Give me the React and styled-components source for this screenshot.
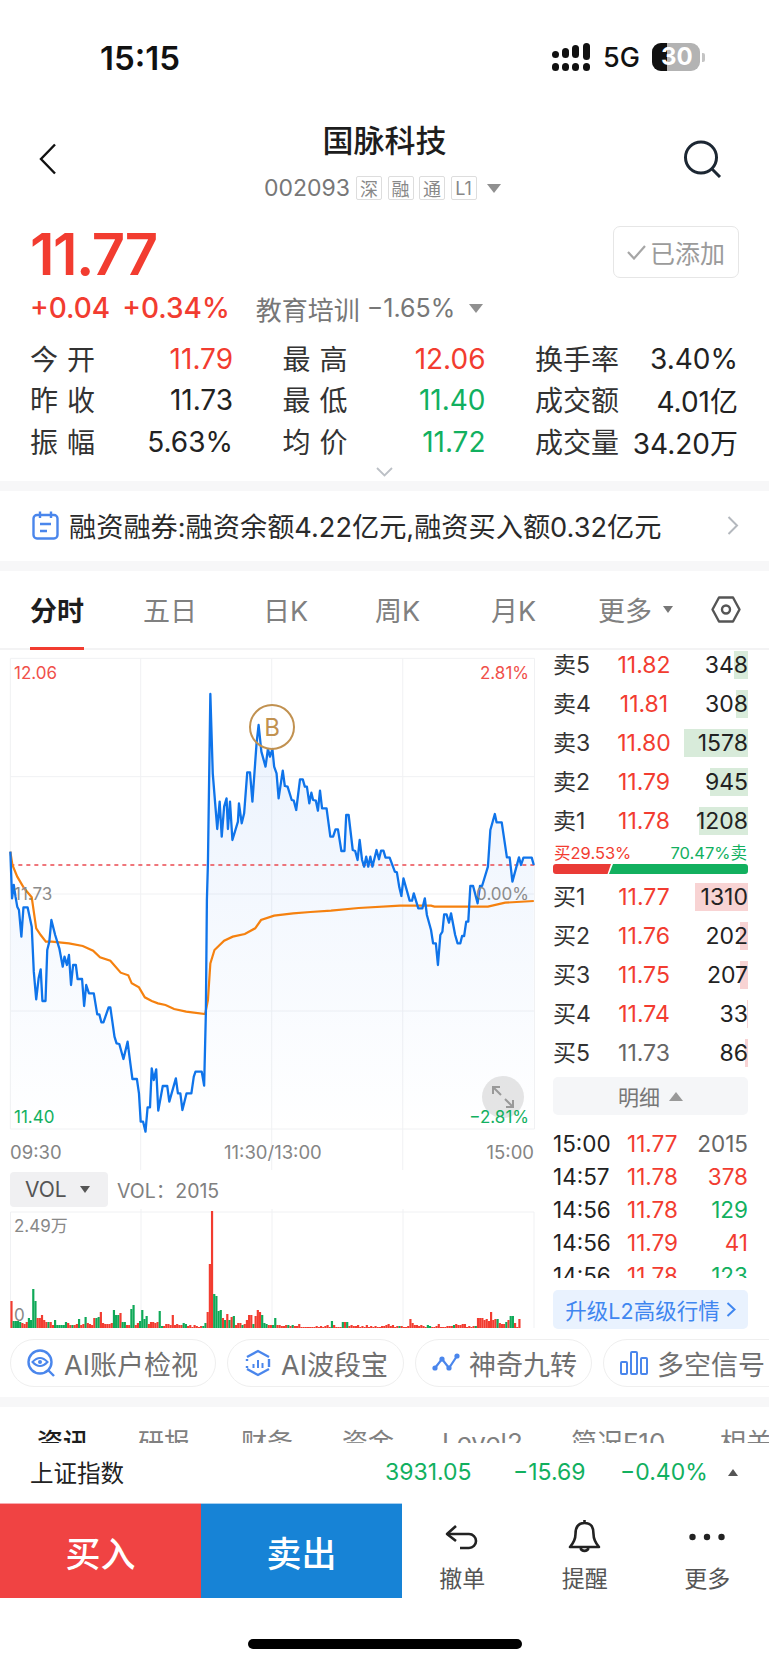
import styled, { createGlobalStyle } from "styled-components"

const RED = "#f23c30"
const GREEN = "#12b05f"
const BLUE = "#4a86ec"

const GlobalStyle = createGlobalStyle`
  html, body {
    margin: 0;
    padding: 0;
    background: #fff;
    font-family: Inter, "Noto Sans CJK SC", sans-serif;
    color: #222;
  }
  * { box-sizing: border-box; }
`

// traced from the reference: x = 2.9 units per px, y = 3 units per px, origin at (0, 650)
const pricePts = "30,605 35,745 40,705 45,740 50,770 55,780 62,860 68,772 80,772 92,830 98,965 105,1048 112,985 118,958 123,1053 132,1053 137,900 143,875 149,810 160,855 172,895 182,950 187,920 194,945 200,915 206,1005 212,945 220,945 225,987 238,987 244,1068 250,1005 258,1030 272,1030 282,1093 288,1093 294,1117 300,1117 315,1072 320,1072 332,1160 338,1180 346,1182 358,1227 370,1175 378,1240 384,1287 397,1287 403,1330 408,1415 415,1415 422,1445 428,1372 435,1372 440,1255 446,1290 453,1258 459,1382 472,1308 485,1308 491,1355 510,1285 516,1330 523,1330 529,1380 541,1330 555,1330 562,1280 567,1265 585,1265 592,1307 597,1090 600,750 603,640 610,132 617,370 624,460 630,537 637,455 643,560 650,470 657,445 661,537 667,455 674,570 690,515 693,460 701,520 708,490 717,367 725,367 732,455 744,280 750,225 758,305 770,350 777,297 783,320 790,297 795,350 802,370 808,445 813,410 820,362 826,408 834,410 846,450 852,452 859,480 870,388 878,388 884,410 890,410 897,460 903,428 908,450 916,452 922,482 928,422 934,475 947,475 958,560 966,560 973,538 980,538 990,603 999,603 1004,495 1011,495 1023,600 1030,603 1037,630 1043,570 1050,630 1056,650 1062,620 1068,650 1074,620 1080,650 1092,600 1099,628 1105,602 1112,602 1118,623 1130,623 1145,665 1151,667 1158,712 1164,738 1170,685 1188,752 1195,752 1200,730 1213,775 1225,775 1232,745 1238,795 1250,840 1256,880 1264,880 1270,945 1277,855 1283,845 1288,793 1295,793 1302,818 1308,790 1320,855 1327,880 1335,880 1340,858 1346,858 1352,815 1358,815 1364,708 1372,708 1385,760 1392,708 1398,708 1415,650 1422,540 1435,492 1440,517 1455,517 1470,622 1478,622 1486,695 1505,622 1511,645 1518,623 1542,623 1548,645"
const avgPts = "30,605 36,645 50,680 70,715 92,742 105,835 118,855 133,875 150,875 200,880 240,888 270,902 290,922 320,932 350,968 372,976 382,1000 403,1012 420,1042 440,1053 458,1060 480,1065 505,1077 540,1085 595,1092 603,1050 610,940 622,900 650,872 675,860 710,852 740,835 757,810 795,797 850,790 900,786 960,782 1040,774 1160,767 1250,767 1260,770 1415,770 1465,758 1548,753"

const volHeights = [27,7,7,7,6,5,4,6,10,8,39,27,10,10,13,8,6,6,6,3,8,3,3,3,3,6,5,3,3,3,4,9,3,4,11,5,4,3,10,10,11,16,5,4,4,4,5,18,13,13,15,6,6,3,3,19,23,3,5,7,18,9,12,4,6,6,5,6,17,2,2,4,4,3,13,3,4,3,3,5,4,2,3,1,3,2,1,2,2,5,16,64,117,34,32,17,18,10,8,14,8,11,12,3,5,5,3,4,8,13,13,4,12,18,16,13,5,4,3,3,3,10,3,3,2,2,3,3,2,3,2,2,4,1,1,1,1,1,1,1,2,1,2,1,2,3,1,7,3,1,1,1,6,6,6,2,3,2,2,3,1,2,1,3,1,2,1,2,1,1,2,2,3,4,2,3,1,2,2,2,1,1,2,9,5,3,3,2,3,2,1,3,2,1,1,2,4,1,1,1,2,2,2,3,4,3,3,4,4,1,2,1,2,2,10,10,10,8,9,7,16,8,9,9,5,4,4,6,8,12,12,5,1,9]
const volGreen = new Set([1,2,3,4,8,9,10,11,17,20,21,22,23,24,25,28,31,34,39,40,47,48,49,51,52,55,56,59,60,61,62,68,69,79,80,88,89,93,94,95,96,98,100,102,106,111,115,116,117,120,121,127,129,147,152,154,178,191,192,203,213,223,227,229,230,240])

const asks = [
  { label: "卖5", price: "11.82", vol: "348", bar: 14 },
  { label: "卖4", price: "11.81", vol: "308", bar: 12 },
  { label: "卖3", price: "11.80", vol: "1578", bar: 64 },
  { label: "卖2", price: "11.79", vol: "945", bar: 38 },
  { label: "卖1", price: "11.78", vol: "1208", bar: 49 },
]
const bids = [
  { label: "买1", price: "11.77", vol: "1310", bar: 53 },
  { label: "买2", price: "11.76", vol: "202", bar: 8 },
  { label: "买3", price: "11.75", vol: "207", bar: 8 },
  { label: "买4", price: "11.74", vol: "33", bar: 1 },
  { label: "买5", price: "11.73", vol: "86", bar: 3, flat: true },
]
const ticks = [
  ["15:00", "11.77", "2015", "#666"],
  ["14:57", "11.78", "378", RED],
  ["14:56", "11.78", "129", GREEN],
  ["14:56", "11.79", "41", RED],
  ["14:56", "11.78", "123", GREEN],
]
const stats = [
  ["今 开", "11.79", RED],
  ["最 高", "12.06", RED],
  ["换手率", "3.40%", "#222"],
  ["昨 收", "11.73", "#222"],
  ["最 低", "11.40", GREEN],
  ["成交额", "4.01亿", "#222"],
  ["振 幅", "5.63%", "#222"],
  ["均 价", "11.72", GREEN],
  ["成交量", "34.20万", "#222"],
]

export default function App() {
  return (
    <Page>
      <GlobalStyle />
      <StatusBar>
        <Clock>15:15</Clock>
        <StatusRight>
          <svg width="38" height="28" viewBox="0 0 38 28" fill="#111">
            <rect x="0" y="8" width="7" height="7" rx="3.5" />
            <rect x="10" y="5" width="7" height="10" rx="3.5" />
            <rect x="20" y="2" width="7" height="13" rx="3.5" />
            <rect x="31" y="0" width="7" height="17" rx="3.5" />
            <rect x="0" y="20" width="7" height="8" rx="3.5" />
            <rect x="10" y="20" width="7" height="8" rx="3.5" />
            <rect x="20" y="20" width="7" height="8" rx="3.5" />
            <rect x="31" y="20" width="7" height="8" rx="3.5" />
          </svg>
          <Network>5G</Network>
          <Battery>
            <BatteryLevel />
            <BatteryText>30</BatteryText>
          </Battery>
          <BatteryNub />
        </StatusRight>
      </StatusBar>

      <NavBar>
        <BackIcon width="18" height="32" viewBox="0 0 18 32" fill="none" stroke="#111" strokeWidth="2.4">
          <path d="M16 1.5 L2 16 L16 30.5" />
        </BackIcon>
        <NavCenter>
          <Title>国脉科技</Title>
          <SubTitle>
            <Code>002093</Code>
            <Badge>深</Badge>
            <Badge>融</Badge>
            <Badge>通</Badge>
            <Badge>L1</Badge>
            <DownTriangle $w={15} $h={9} $color="#909090" $ml={5} />
          </SubTitle>
        </NavCenter>
        <SearchIcon width="40" height="38" viewBox="0 0 40 38" fill="none" stroke="#1c2733" strokeWidth="3">
          <circle cx="18" cy="17.5" r="15.5" />
          <path d="M29 29 L37 37" />
        </SearchIcon>
      </NavBar>

      <Quote>
        <PriceRow>
          <BigPrice>11.77</BigPrice>
          <AddedButton>
            <svg width="19" height="15" viewBox="0 0 19 15" fill="none" stroke="#a6a6a6" strokeWidth="2.2">
              <path d="M1 7 L7 13.5 L18 1" />
            </svg>
            已添加
          </AddedButton>
        </PriceRow>
        <ChangeRow>
          <ChangeValue>+0.04</ChangeValue>
          <ChangeValue>+0.34%</ChangeValue>
          <Sector>教育培训</Sector>
          <SectorChange>−1.65%</SectorChange>
          <DownTriangle $w={15} $h={9} $color="#909090" $ml={14} />
        </ChangeRow>
        <StatGrid>
          {stats.map(([label, value, color]) => (
            <Stat key={label}>
              <StatLabel>{label}</StatLabel>
              <StatValue $color={color}>{value}</StatValue>
            </Stat>
          ))}
        </StatGrid>
        <ExpandHint>
          <svg width="17" height="10" viewBox="0 0 17 10" fill="none" stroke="#bcc0c6" strokeWidth="1.8">
            <path d="M1 1 L8.5 8.5 L16 1" />
          </svg>
        </ExpandHint>
      </Quote>

      <Band />

      <Banner>
        <svg width="27" height="29" viewBox="0 0 27 29" fill="none" stroke={BLUE} strokeWidth="2.4">
          <rect x="1.5" y="4" width="24" height="23.5" rx="3.5" />
          <path d="M8 0.5 V7 M19 0.5 V7 M8 13 H19 M8 20 H15" />
        </svg>
        <BannerText>融资融券:融资余额4.22亿元,融资买入额0.32亿元</BannerText>
        <svg width="12" height="19" viewBox="0 0 12 19" fill="none" stroke="#b4b8be" strokeWidth="2">
          <path d="M1.5 1 L10 9.5 L1.5 18" />
        </svg>
      </Banner>

      <Band />

      <ChartTabs>
        <ChartTab $active $w={54} $mr={59}>分时</ChartTab>
        <ChartTab $w={50} $mr={70}>五日</ChartTab>
        <ChartTab $w={42} $mr={70}>日K</ChartTab>
        <ChartTab $w={44} $mr={72}>周K</ChartTab>
        <ChartTab $w={42} $mr={72}>月K</ChartTab>
        <MoreTab>
          更多
          <DownTriangle $w={11} $h={7} $color="#777" $ml={11} />
        </MoreTab>
        <svg width="30" height="27" viewBox="0 0 30 27" fill="none" stroke="#555" strokeWidth="2.4">
          <path d="M8 1.5 H22 L28.5 13.5 L22 25.5 H8 L1.5 13.5 Z" strokeLinejoin="round" />
          <circle cx="15" cy="13.5" r="4" />
        </svg>
      </ChartTabs>

      <Market>
        <ChartColumn>
          <PriceChart>
            <ChartSvg viewBox="0 0 1566 1560" preserveAspectRatio="none">
              <defs>
                <linearGradient id="area" x1="0" y1="0" x2="0" y2="1">
                  <stop offset="0" stopColor="#2c7cf0" stopOpacity="0.1" />
                  <stop offset="1" stopColor="#2c7cf0" stopOpacity="0" />
                </linearGradient>
              </defs>
              <g stroke="#f0f1f3" strokeWidth="1" fill="none">
                <path d="M30 25 H1550 M30 380 H1550 M30 732 H1550 M30 1083 H1550 M30 1437 H1550 M30 25 V1437 M1550 25 V1437" vectorEffect="non-scaling-stroke" />
                <path d="M408 25 V1560 M788 25 V1560 M1168 25 V1560" vectorEffect="non-scaling-stroke" />
              </g>
              <polygon points={`${pricePts} 1548,1437 30,1437`} fill="url(#area)" />
              <path d="M30 645 H1550" stroke="#ea4a50" strokeWidth="1.5" strokeDasharray="4 4" fill="none" vectorEffect="non-scaling-stroke" />
              <polyline points={avgPts} fill="none" stroke="#f5810f" strokeWidth="2.2" vectorEffect="non-scaling-stroke" />
              <polyline points={pricePts} fill="none" stroke="#0f74ea" strokeWidth="2.3" strokeLinejoin="round" vectorEffect="non-scaling-stroke" />
            </ChartSvg>
            <AxisLabel $left={14} $top={12} $color="#f0504a">12.06</AxisLabel>
            <AxisLabel $right={11} $top={12} $color="#f0504a">2.81%</AxisLabel>
            <AxisLabel $left={14} $top={233} $color="#8c8c8c">11.73</AxisLabel>
            <AxisLabel $right={11} $top={233} $color="#8c8c8c">0.00%</AxisLabel>
            <ExpandButton>
              <svg width="24" height="24" viewBox="0 0 24 24" fill="none" stroke="#999" strokeWidth="2">
                <path d="M2 2 L10 10 M2 9 V2 H9 M22 22 L14 14 M22 15 V22 H15" />
              </svg>
            </ExpandButton>
            <AxisLabel $left={14} $top={456} $color={GREEN}>11.40</AxisLabel>
            <AxisLabel $right={11} $top={456} $color={GREEN}>−2.81%</AxisLabel>
            <TradeMark>B</TradeMark>
            <TimeLabel $left={10}>09:30</TimeLabel>
            <TimeLabel $left={224}>11:30/13:00</TimeLabel>
            <TimeLabel $right={6}>15:00</TimeLabel>
          </PriceChart>
          <VolHeader>
            <VolSelect>
              VOL
              <DownTriangle $w={11} $h={7} $color="#555" $ml={13} />
            </VolSelect>
            <VolText>VOL：2015</VolText>
          </VolHeader>
          <VolChart>
            <svg width="540" height="128" viewBox="0 0 540 128">
              <path d="M10.5 5 H534 M10.5 5 V121 M534 5 V121 M141 2 V121 M272 2 V121 M403 2 V121" stroke="#f0f1f3" fill="none" />
              {volHeights.map((h, i) => (
                <rect key={i} x={10.4 + i * 2.18} y={121 - h} width="2.18" height={h} fill={volGreen.has(i) ? "#0fa958" : "#f23c30"} />
              ))}
            </svg>
            <VolLabel $top={7}>2.49万</VolLabel>
            <VolLabel $top={96}>0</VolLabel>
          </VolChart>
        </ChartColumn>

        <BookColumn>
          <BookGroup>
            {asks.map(a => (
              <BookRow key={a.label}>
                <BookLabel>{a.label}</BookLabel>
                <BookPrice>{a.price}</BookPrice>
                <BookVol>
                  <VolBar $color="#d8ebda" style={{ width: a.bar }} />
                  <VolNum>{a.vol}</VolNum>
                </BookVol>
              </BookRow>
            ))}
          </BookGroup>
          <Ratio>
            <RatioLabels>
              <RatioText $color={RED}>买29.53%</RatioText>
              <RatioText $color={GREEN}>70.47%卖</RatioText>
            </RatioLabels>
            <RatioBar>
              <RatioBuy />
              <RatioSell />
            </RatioBar>
          </Ratio>
          <BookGroup>
            {bids.map(b => (
              <BookRow key={b.label}>
                <BookLabel>{b.label}</BookLabel>
                <BookPrice $flat={b.flat}>{b.price}</BookPrice>
                <BookVol>
                  <VolBar $color="#f8d3d3" style={{ width: b.bar }} />
                  <VolNum>{b.vol}</VolNum>
                </BookVol>
              </BookRow>
            ))}
          </BookGroup>
          <DetailToggle>
            明细
            <UpTriangle $w={15} $h={9} $color="#999" $ml={9} />
          </DetailToggle>
          <TickList>
            {ticks.map(([time, price, vol, color], i) => (
              <TickRow key={i}>
                <span>{time}</span>
                <TickPrice>{price}</TickPrice>
                <TickVol $color={color}>{vol}</TickVol>
              </TickRow>
            ))}
          </TickList>
          <UpgradeButton>
            升级L2高级行情
            <svg width="10" height="15" viewBox="0 0 10 15" fill="none" stroke="#3f86f0" strokeWidth="2">
              <path d="M1.5 1 L8.5 7.5 L1.5 14" />
            </svg>
          </UpgradeButton>
        </BookColumn>
      </Market>

      <Pills>
        <Pill $w={206}>
          <svg width="28" height="28" viewBox="0 0 28 28" fill="none" stroke={BLUE} strokeWidth="2.4">
            <circle cx="13" cy="13" r="11.5" />
            <path d="M5.5 13 Q13 5 20.5 13 Q13 21 5.5 13 Z" strokeWidth="2" />
            <circle cx="13" cy="13" r="2" fill={BLUE} stroke="none" />
            <path d="M21 21 L27 27" />
          </svg>
          <PillText>AI账户检视</PillText>
        </Pill>
        <Pill $w={177}>
          <svg width="28" height="28" viewBox="0 0 28 28" fill="none" stroke={BLUE} strokeWidth="2.4">
            <path d="M3 8 L14 2 L25 8 M25 20 L14 26 L3 20 M3 10 V12 M3 17 V19 M25 10 V18" />
            <path d="M9.5 15 V19 M14 11 V19 M18.5 14 V19" strokeWidth="2" />
          </svg>
          <PillText>AI波段宝</PillText>
        </Pill>
        <Pill $w={177}>
          <svg width="28" height="22" viewBox="0 0 28 22" fill="none" stroke={BLUE} strokeWidth="2.2">
            <path d="M3 16 L10 7 L17 16 L25 4" />
            <circle cx="3" cy="16" r="2.6" fill={BLUE} stroke="none" />
            <circle cx="10" cy="7" r="2.6" fill={BLUE} stroke="none" />
            <circle cx="17" cy="16" r="2.6" fill={BLUE} stroke="none" />
            <circle cx="25" cy="4" r="2.6" fill={BLUE} stroke="none" />
          </svg>
          <PillText>神奇九转</PillText>
        </Pill>
        <Pill $w={190}>
          <svg width="28" height="24" viewBox="0 0 28 24" fill="none" stroke={BLUE} strokeWidth="2">
            <rect x="1" y="11" width="6" height="12" rx="1" />
            <rect x="11" y="1" width="6" height="22" rx="1" />
            <rect x="21" y="7" width="6" height="16" rx="1" />
          </svg>
          <PillText>多空信号</PillText>
        </Pill>
      </Pills>

      <Band />

      <InfoTabs>
        <InfoTab $active $w={101}>资讯</InfoTab>
        <InfoTab $w={103}>研报</InfoTab>
        <InfoTab $w={101}>财务</InfoTab>
        <InfoTab $w={100}>资金</InfoTab>
        <InfoTab $w={129}>Level2</InfoTab>
        <InfoTab $w={149}>简况F10</InfoTab>
        <InfoTab>相关</InfoTab>
      </InfoTabs>

      <IndexBar>
        <IndexName>上证指数</IndexName>
        <IndexValue $w={83}>3931.05</IndexValue>
        <IndexValue $w={72} $ml={45}>−15.69</IndexValue>
        <IndexValue $w={84} $ml={35}>−0.40%</IndexValue>
        <UpTriangle $w={11} $h={7} $color="#555" $ml={24} />
      </IndexBar>

      <BottomBar>
        <TradeButton $bg="#f04343" $edge="#f8aab0">买入</TradeButton>
        <TradeButton $bg="#1783d6" $edge="#a6cff0">卖出</TradeButton>
        <ToolButtons>
          <Tool>
            <ToolIcon>
              <svg width="34" height="26" viewBox="0 0 34 26" fill="none" stroke="#222" strokeWidth="2.6">
                <path d="M11 2 L2 10 L11 17" strokeLinejoin="round" />
                <path d="M2 10 H24 A7 7 0 0 1 24 24 H15" />
              </svg>
            </ToolIcon>
            撤单
          </Tool>
          <Tool>
            <ToolIcon>
              <svg width="33" height="35" viewBox="0 0 33 35" fill="none" stroke="#222" strokeWidth="2.6">
                <path d="M16.5 1 V4 M16.5 4 C9 4 7.5 9 7.5 15 C7.5 21 5.5 24 2 28 H31 C27.5 24 25.5 21 25.5 15 C25.5 9 24 4 16.5 4 Z" strokeLinejoin="round" />
                <path d="M12.5 29 A4.2 4.2 0 0 0 20.5 29" />
              </svg>
            </ToolIcon>
            提醒
          </Tool>
          <Tool>
            <ToolIcon>
              <svg width="36" height="8" viewBox="0 0 36 8" fill="#222">
                <circle cx="3.5" cy="4" r="3.2" />
                <circle cx="18" cy="4" r="3.2" />
                <circle cx="32.5" cy="4" r="3.2" />
              </svg>
            </ToolIcon>
            更多
          </Tool>
        </ToolButtons>
      </BottomBar>

      <HomeArea>
        <HomeIndicator />
      </HomeArea>
    </Page>
  )
}

const Page = styled.div`
  width: 769px;
  height: 1665px;
  overflow: hidden;
  background: #fff;
  display: flex;
  flex-direction: column;
`
const StatusBar = styled.div`
  height: 114px;
  flex: none;
  padding: 43px 64px 0 100px;
  display: flex;
  justify-content: space-between;
  align-items: flex-start;
`
const Clock = styled.div`
  font-size: 33px;
  line-height: 30px;
  font-weight: 600;
  color: #111;
`
const StatusRight = styled.div`
  display: flex;
  align-items: center;
  height: 28px;
  width: 153px;
`
const Network = styled.div`
  font-size: 27px;
  font-weight: 500;
  margin-left: 13px;
  width: 49px;
  color: #111;
`
const Battery = styled.div`
  position: relative;
  width: 48px;
  flex: none;
  height: 28px;
  border-radius: 9px;
  background: #b3b3b3;
  overflow: hidden;
`
const BatteryNub = styled.div`
  width: 3px;
  height: 9px;
  margin-left: 2px;
  flex: none;
  border-radius: 0 2px 2px 0;
  background: #c4c4c4;
`
const BatteryLevel = styled.div`
  width: 15px;
  height: 28px;
  background: #111;
`
const BatteryText = styled.div`
  position: absolute;
  inset: 0;
  padding-left: 9px;
  font-size: 24px;
  line-height: 28px;
  font-weight: 700;
  color: #fff;
`
const NavBar = styled.div`
  height: 86px;
  flex: none;
  position: relative;
  display: flex;
  justify-content: center;
`
const BackIcon = styled.svg`
  position: absolute;
  left: 39px;
  top: 29px;
`
const SearchIcon = styled.svg`
  position: absolute;
  left: 683px;
  top: 26px;
`
const NavCenter = styled.div`
  display: flex;
  flex-direction: column;
  align-items: center;
`
const Title = styled.div`
  font-size: 31px;
  line-height: 38px;
  margin-top: 8px;
  font-weight: 500;
  color: #1d1d1d;
`
const SubTitle = styled.div`
  display: flex;
  align-items: center;
  margin-top: 16px;
  margin-right: 4px;
  height: 24px;
`
const Code = styled.span`
  font-size: 23px;
  color: #777;
  margin-right: 6px;
`
const Badge = styled.span`
  width: 26px;
  height: 24px;
  margin-right: 5.5px;
  border: 1px solid #ddd;
  border-radius: 2px;
  font-size: 18px;
  color: #888;
  display: flex;
  align-items: center;
  justify-content: center;
`
const DownTriangle = styled.span`
  display: inline-block;
  flex: none;
  width: 0;
  height: 0;
  margin-left: ${p => p.$ml || 0}px;
  border-left: ${p => p.$w / 2}px solid transparent;
  border-right: ${p => p.$w / 2}px solid transparent;
  border-top: ${p => p.$h}px solid ${p => p.$color};
`
const UpTriangle = styled(DownTriangle)`
  border-top: 0;
  border-bottom: ${p => p.$h}px solid ${p => p.$color};
`
const Quote = styled.div`
  height: 281px;
  flex: none;
  padding: 26px 30px 0 30px;
  display: flex;
  flex-direction: column;
`
const PriceRow = styled.div`
  display: flex;
  justify-content: space-between;
  align-items: flex-start;
  height: 64px;
`
const BigPrice = styled.div`
  font-size: 58px;
  line-height: 52px;
  margin-top: 2px;
  font-weight: 600;
  letter-spacing: -1.5px;
  color: ${RED};
`
const AddedButton = styled.div`
  width: 126px;
  height: 52px;
  border: 1.5px solid #e6e6e6;
  border-radius: 7px;
  display: flex;
  align-items: center;
  justify-content: center;
  gap: 4px;
  font-size: 25px;
  color: #9b9b9b;
`
const ChangeRow = styled.div`
  display: flex;
  align-items: center;
  height: 30px;
  margin-top: 10px;
`
const ChangeValue = styled.span`
  font-size: 28px;
  font-weight: 500;
  color: ${RED};
  margin-right: 12px;
`
const Sector = styled.span`
  font-size: 26px;
  color: #777;
  margin-left: 14px;
`
const SectorChange = styled.span`
  font-size: 25px;
  color: #777;
  margin-left: 7px;
`
const StatGrid = styled.div`
  display: grid;
  grid-template-columns: repeat(3, 203px);
  column-gap: 49.5px;
  row-gap: 6.5px;
  margin-top: 17px;
`
const Stat = styled.div`
  display: flex;
  justify-content: space-between;
  align-items: center;
  height: 35px;
`
const StatLabel = styled.span`
  font-size: 28px;
  color: #333;
  word-spacing: 1px;
`
const StatValue = styled.span`
  font-size: 28px;
  margin-top: 2px;
  color: ${p => p.$color};
`
const ExpandHint = styled.div`
  height: 20px;
  margin-top: 5px;
  display: flex;
  justify-content: center;
  align-items: center;
`
const Band = styled.div`
  height: 10px;
  flex: none;
  background: #f7f7f8;
`
const Banner = styled.div`
  height: 70px;
  flex: none;
  padding: 0 30px 2px 32px;
  display: flex;
  align-items: center;
`
const BannerText = styled.div`
  flex: 1;
  margin-left: 10px;
  font-size: 27.2px;
  color: #2a2a2a;
  white-space: nowrap;
`
const ChartTabs = styled.div`
  height: 79px;
  flex: none;
  border-bottom: 2px solid #f3f3f4;
  display: flex;
  align-items: center;
  padding: 0 28px 0 30px;
`
const ChartTab = styled.div`
  position: relative;
  width: ${p => p.$w}px;
  margin-right: ${p => p.$mr}px;
  font-size: 27px;
  font-weight: ${p => (p.$active ? 600 : 400)};
  color: ${p => (p.$active ? "#1d1d1d" : "#808080")};
  white-space: nowrap;
  &::after {
    content: "";
    display: ${p => (p.$active ? "block" : "none")};
    position: absolute;
    left: 0;
    right: 0;
    bottom: -21px;
    height: 3px;
    background: ${RED};
  }
`
const MoreTab = styled.div`
  display: flex;
  align-items: center;
  flex: 1;
  font-size: 27px;
  color: #808080;
  margin-left: -7px;
`
const Market = styled.div`
  height: 685px;
  flex: none;
  display: flex;
  align-items: flex-start;
`
const ChartColumn = styled.div`
  width: 540px;
  flex: none;
`
const PriceChart = styled.div`
  position: relative;
  height: 520px;
`
const ChartSvg = styled.svg`
  display: block;
  width: 540px;
  height: 520px;
`
const AxisLabel = styled.span`
  position: absolute;
  ${p => (p.$left != null ? `left: ${p.$left}px;` : `right: ${p.$right}px;`)}
  top: ${p => p.$top}px;
  font-size: 17px;
  line-height: 22px;
  color: ${p => p.$color};
`
const ExpandButton = styled.div`
  position: absolute;
  left: 482px;
  top: 426px;
  width: 42px;
  height: 42px;
  border-radius: 50%;
  background: rgba(190, 190, 190, 0.4);
  display: flex;
  align-items: center;
  justify-content: center;
`
const TradeMark = styled.div`
  position: absolute;
  left: 249px;
  top: 54px;
  width: 46px;
  height: 46px;
  border: 2px solid #c19150;
  border-radius: 50%;
  display: flex;
  align-items: center;
  justify-content: center;
  font-size: 24px;
  color: #c19150;
`
const TimeLabel = styled.span`
  position: absolute;
  ${p => (p.$left != null ? `left: ${p.$left}px;` : `right: ${p.$right}px;`)}
  top: 490px;
  font-size: 18.5px;
  line-height: 24px;
  color: #858585;
`
const VolHeader = styled.div`
  margin-top: 2px;
  height: 35px;
  display: flex;
  align-items: center;
  padding-left: 10px;
`
const VolSelect = styled.div`
  width: 98px;
  height: 35px;
  border-radius: 4px;
  background: #f0f0f2;
  display: flex;
  align-items: center;
  padding-left: 15px;
  font-size: 21px;
  color: #555;
`
const VolText = styled.span`
  margin-left: 9px;
  font-size: 19.5px;
  color: #808080;
`
const VolChart = styled.div`
  position: relative;
  height: 128px;
  svg { display: block; }
`
const VolLabel = styled.span`
  position: absolute;
  left: 14px;
  top: ${p => p.$top}px;
  font-size: 17px;
  line-height: 24px;
  color: #888;
`
const BookColumn = styled.div`
  width: 195px;
  margin-left: 13px;
  flex: none;
  padding-top: 1px;
`
const BookGroup = styled.div`
  display: flex;
  flex-direction: column;
  gap: 11px;
`
const BookRow = styled.div`
  height: 28px;
  display: grid;
  grid-template-columns: 64px 54px 1fr;
  align-items: center;
`
const BookLabel = styled.span`
  font-size: 23px;
  line-height: 28px;
  color: #333;
`
const BookPrice = styled.span`
  font-size: 23px;
  line-height: 28px;
  margin-top: -1px;
  text-align: center;
  color: ${p => (p.$flat ? "#666" : RED)};
`
const BookVol = styled.div`
  position: relative;
  height: 28px;
  display: flex;
  justify-content: flex-end;
  align-items: center;
`
const VolBar = styled.div`
  position: absolute;
  top: 0;
  right: 0;
  bottom: 0;
  background: ${p => p.$color};
`
const VolNum = styled.span`
  position: relative;
  font-size: 23px;
  line-height: 28px;
  color: #222;
`
const Ratio = styled.div`
  height: 48px;
  padding-top: 8px;
`
const RatioLabels = styled.div`
  display: flex;
  justify-content: space-between;
  height: 21px;
  padding: 0 1px;
`
const RatioText = styled.span`
  font-size: 16.5px;
  line-height: 20px;
  color: ${p => p.$color};
`
const RatioBar = styled.div`
  display: flex;
  height: 10px;
  margin-top: 0;
  border-radius: 3px;
  overflow: hidden;
`
const RatioBuy = styled.div`
  width: 58px;
  background: #ea3b36;
  clip-path: polygon(0 0, 100% 0, 94% 100%, 0 100%);
`
const RatioSell = styled.div`
  flex: 1;
  margin-left: -2px;
  background: #12b05f;
  clip-path: polygon(4px 0, 100% 0, 100% 100%, 0 100%);
`
const DetailToggle = styled.div`
  height: 38px;
  margin-top: 10px;
  border-radius: 5px;
  background: #f5f6f8;
  display: flex;
  align-items: center;
  justify-content: center;
  font-size: 21px;
  color: #777;
`
const TickList = styled.div`
  height: 163px;
  padding-top: 11.5px;
  overflow: hidden;
`
const TickRow = styled.div`
  display: grid;
  grid-template-columns: 74px 52px 1fr;
  align-items: center;
  height: 33px;
  font-size: 22.5px;
  color: #222;
`
const TickPrice = styled.span`
  color: ${RED};
`
const TickVol = styled.span`
  text-align: right;
  color: ${p => p.$color};
`
const UpgradeButton = styled.div`
  height: 39px;
  margin-top: 12px;
  border-radius: 5px;
  background: #e9f2fe;
  display: flex;
  align-items: center;
  justify-content: center;
  gap: 6px;
  font-size: 21.5px;
  color: #3f86f0;
`
const Pills = styled.div`
  height: 62px;
  flex: none;
  padding: 4px 0 0 10px;
  display: flex;
  gap: 11px;
`
const Pill = styled.div`
  width: ${p => p.$w}px;
  flex: none;
  height: 48px;
  border: 1.5px solid #efefef;
  border-radius: 24px;
  padding-left: 16px;
  display: flex;
  align-items: center;
  gap: 9px;
`
const PillText = styled.span`
  font-size: 27px;
  color: #707070;
  white-space: nowrap;
`
const InfoTabs = styled.div`
  height: 36px;
  flex: none;
  overflow: hidden;
  display: flex;
  padding: 20px 0 0 37px;
`
const InfoTab = styled.div`
  width: ${p => (p.$w ? `${p.$w}px` : "auto")};
  flex: none;
  font-size: 26px;
  line-height: 32px;
  font-weight: ${p => (p.$active ? 500 : 400)};
  color: ${p => (p.$active ? "#1d1d1d" : "#808080")};
  white-space: nowrap;
`
const IndexBar = styled.div`
  height: 60px;
  flex: none;
  display: flex;
  align-items: center;
  padding: 0 30px 2px;
`
const IndexName = styled.div`
  font-size: 23.5px;
  color: #222;
  width: 355px;
`
const IndexValue = styled.div`
  width: ${p => p.$w}px;
  margin-left: ${p => p.$ml || 0}px;
  font-size: 23px;
  color: ${GREEN};
  text-align: right;
  white-space: nowrap;
`
const BottomBar = styled.div`
  height: 95px;
  flex: none;
  display: flex;
`
const TradeButton = styled.div`
  width: 201px;
  flex: none;
  background: ${p => p.$bg};
  border-top: 1px solid ${p => p.$edge};
  color: #fff;
  font-size: 35px;
  font-weight: 500;
  display: flex;
  align-items: center;
  justify-content: center;
`
const ToolButtons = styled.div`
  flex: 1;
  display: flex;
  margin-left: -1px;
`
const Tool = styled.div`
  width: 122.5px;
  display: flex;
  flex-direction: column;
  align-items: center;
  padding-top: 15px;
  font-size: 23px;
  color: #555;
`
const ToolIcon = styled.div`
  height: 37px;
  margin-bottom: 5px;
  display: flex;
  align-items: center;
  justify-content: center;
`
const HomeArea = styled.div`
  flex: 1;
  padding-top: 41px;
  display: flex;
  justify-content: center;
`
const HomeIndicator = styled.div`
  width: 274px;
  height: 10px;
  border-radius: 5px;
  background: #000;
`
